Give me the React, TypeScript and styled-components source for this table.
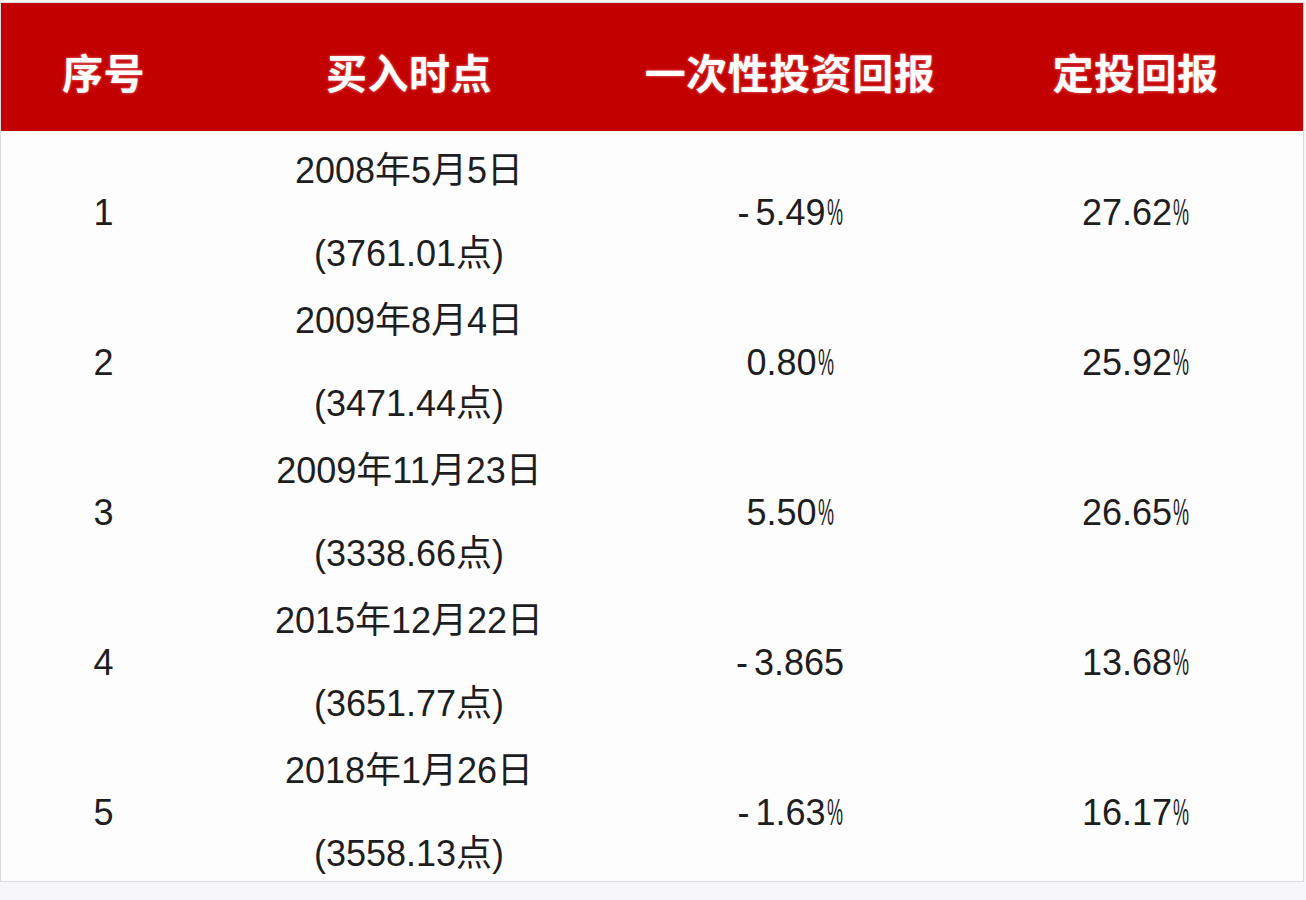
import styled, { createGlobalStyle } from 'styled-components';

const GlobalStyle = createGlobalStyle`
    html, body {
        margin: 0;
        padding: 0;
        background: #f7f7f9;
    }
    body {
        padding-top: 2px;
        font-family: "Noto Sans CJK SC", "Noto Sans", sans-serif;
    }
`;

const COLUMNS = '205px 406px 356px 335px';

const Table = styled.div`
    width: 1302px;
    border: 1px solid #dcdcdf;
    background: #fdfdfe;
`;

const HeaderRow = styled.div`
    display: grid;
    grid-template-columns: ${COLUMNS};
    height: 128px;
    background: #c30000;
`;

const HeadCell = styled.div`
    display: flex;
    align-items: center;
    justify-content: center;
    padding-top: 8px;
    box-sizing: border-box;
    color: #ffffff;
    font-size: 41px;
    font-weight: 700;
    letter-spacing: 0.5px;
    text-shadow: 0 0 3px rgba(255, 170, 170, 0.75);
`;

const Row = styled.div`
    display: grid;
    grid-template-columns: ${COLUMNS};
    height: 150px;
    padding-top: 13px;
    box-sizing: border-box;
`;

const Cell = styled.div`
    display: flex;
    flex-direction: column;
    align-items: center;
    justify-content: center;
    gap: 39px;
    color: #1e1e1e;
    font-family: "Liberation Sans", "Noto Sans CJK SC", sans-serif;
    font-size: 36px;
    line-height: 44px;
`;

// the percent sign in the source is a narrow, condensed glyph
const Pct = styled.span`
    display: inline-block;
    transform: scaleX(0.5);
    margin: 0 -8px 0 -7px;
`;

const Minus = styled.span`
    margin-right: 6px;
`;

const rows = [
    { no: '1', date: '2008年5月5日', point: '3761.01', once: '-5.49%', fixed: '27.62%' },
    { no: '2', date: '2009年8月4日', point: '3471.44', once: '0.80%', fixed: '25.92%' },
    { no: '3', date: '2009年11月23日', point: '3338.66', once: '5.50%', fixed: '26.65%' },
    { no: '4', date: '2015年12月22日', point: '3651.77', once: '-3.865', fixed: '13.68%' },
    { no: '5', date: '2018年1月26日', point: '3558.13', once: '-1.63%', fixed: '16.17%' },
];

function Value({ text }: { text: string }) {
    const negative = text.startsWith('-');
    let body = negative ? text.slice(1) : text;
    const pct = body.endsWith('%');
    if (pct) body = body.slice(0, -1);
    return (
        <span>
            {negative && <Minus>-</Minus>}
            {body}
            {pct && <Pct>%</Pct>}
        </span>
    );
}

export default function App() {
    return (
        <>
            <GlobalStyle />
            <Table>
                <HeaderRow>
                    <HeadCell>序号</HeadCell>
                    <HeadCell>买入时点</HeadCell>
                    <HeadCell>一次性投资回报</HeadCell>
                    <HeadCell>定投回报</HeadCell>
                </HeaderRow>
                {rows.map((r) => (
                    <Row key={r.no}>
                        <Cell>{r.no}</Cell>
                        <Cell>
                            <span>{r.date}</span>
                            <span>({r.point}点)</span>
                        </Cell>
                        <Cell>
                            <Value text={r.once} />
                        </Cell>
                        <Cell>
                            <Value text={r.fixed} />
                        </Cell>
                    </Row>
                ))}
            </Table>
        </>
    );
}
